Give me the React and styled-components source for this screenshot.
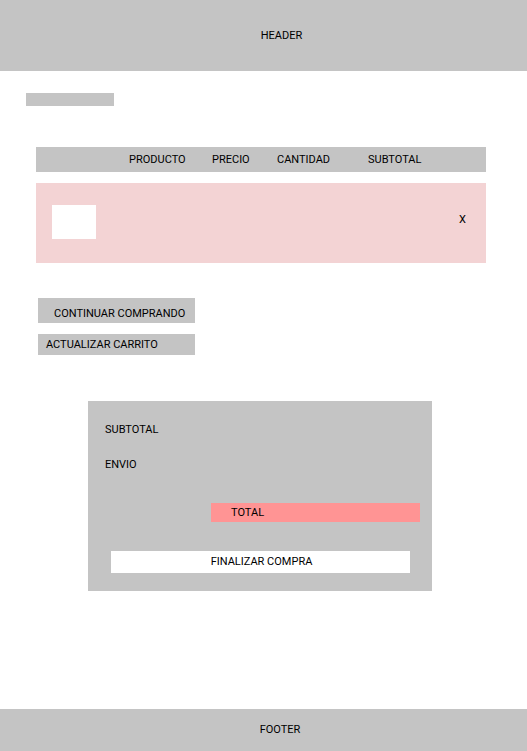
import React from "react";
import styled, { createGlobalStyle } from "styled-components";

const GlobalStyle = createGlobalStyle`
  *, *::before, *::after { box-sizing: border-box; }
  body {
    margin: 0;
    background: #ffffff;
    color: #000000;
    font: 400 11px/16px Roboto, sans-serif;
  }
`;

const Page = styled.div`
  display: flex;
  flex-direction: column;
  min-height: 100vh;
`;

const Header = styled.header`
  padding: 28px 0 27px 36px;
  background: #c4c4c4;
  text-align: center;
`;

const Footer = styled.footer`
  padding: 13px 0 13px 33px;
  background: #c4c4c4;
  text-align: center;
`;

const Main = styled.main`
  flex: 1;
  display: flex;
  flex-direction: column;
  padding: 22px 0 40px;
`;

const Breadcrumb = styled.div`
  width: 88px;
  height: 13px;
  margin-left: 26px;
  background: #c4c4c4;
`;

const CartSection = styled.section`
  margin: 30px 41px 0 36px;
`;

const CartTable = styled.table`
  width: 100%;
  table-layout: fixed;
  border-collapse: separate;
  border-spacing: 0 11px;
`;

const Column = styled.col`
  width: ${({ $width }) => $width}px;
`;

const HeadCell = styled.th`
  padding: 5px 0 4px;
  background: #c4c4c4;
  font-weight: 400;
  text-align: left;
`;

const ItemCell = styled.td`
  height: 80px;
  padding: 22px 0 24px;
  background: #f3d3d4;
  vertical-align: top;
`;

const ThumbCell = styled(ItemCell)`
  padding-left: 16px;
`;

const RemoveCell = styled(ItemCell)`
  padding-top: 29px;
`;

const Thumbnail = styled.div`
  width: 44px;
  height: 34px;
  background: #ffffff;
`;

const Button = styled.button`
  display: block;
  margin: 0;
  padding: 0;
  border: 0;
  background: transparent;
  color: inherit;
  font: inherit;
  text-align: left;
  cursor: pointer;
`;

const Actions = styled.div`
  display: flex;
  flex-direction: column;
  align-items: flex-start;
  gap: 11px;
  margin: 24px 38px 0;
`;

const ActionButton = styled(Button)`
  width: 157px;
  padding: ${({ $primary }) => ($primary ? "8px 0 1px 16px" : "3px 0 2px 8px")};
  background: #c4c4c4;
`;

const Summary = styled.section`
  margin: 46px 95px 0 88px;
  padding: 21px 12px 18px 17px;
  background: #c4c4c4;
`;

const SummaryList = styled.dl`
  display: flex;
  flex-direction: column;
  gap: 19px;
  margin: 0;
`;

const SummaryRow = styled.div`
  display: flex;
`;

const TotalRow = styled(SummaryRow)`
  width: calc(100% - 106px);
  margin: 11px 0 0 auto;
  padding: 2px 20px 1px;
  background: #ff9494;
`;

const CheckoutButton = styled(Button)`
  width: calc(100% - 16px);
  margin: 29px 10px 0 6px;
  padding: 3px 0 3px 2px;
  background: #ffffff;
  text-align: center;
`;

const columnWidths = [93, 83, 65, 91, 91, 27];
const headings = ["", "PRODUCTO", "PRECIO", "CANTIDAD", "SUBTOTAL", ""];

export default function App() {
  return (
    <>
      <GlobalStyle />
      <Page>
        <Header>HEADER</Header>
        <Main>
          <Breadcrumb />
          <CartSection>
            <CartTable>
              <colgroup>
                {columnWidths.map((width, i) => (
                  <Column key={i} $width={width} />
                ))}
              </colgroup>
              <thead>
                <tr>
                  {headings.map((heading, i) =>
                    heading ? (
                      <HeadCell key={i} scope="col">{heading}</HeadCell>
                    ) : (
                      <HeadCell key={i} as="td" />
                    )
                  )}
                </tr>
              </thead>
              <tbody>
                <tr>
                  <ThumbCell>
                    <Thumbnail />
                  </ThumbCell>
                  <ItemCell />
                  <ItemCell />
                  <ItemCell />
                  <ItemCell />
                  <RemoveCell>
                    <Button type="button">X</Button>
                  </RemoveCell>
                </tr>
              </tbody>
            </CartTable>
          </CartSection>
          <Actions>
            <ActionButton type="button" $primary>CONTINUAR COMPRANDO</ActionButton>
            <ActionButton type="button">ACTUALIZAR CARRITO</ActionButton>
          </Actions>
          <Summary>
            <SummaryList>
              <SummaryRow><dt>SUBTOTAL</dt></SummaryRow>
              <SummaryRow><dt>ENVIO</dt></SummaryRow>
              <TotalRow><dt>TOTAL</dt></TotalRow>
            </SummaryList>
            <CheckoutButton type="button">FINALIZAR COMPRA</CheckoutButton>
          </Summary>
        </Main>
        <Footer>FOOTER</Footer>
      </Page>
    </>
  );
}
